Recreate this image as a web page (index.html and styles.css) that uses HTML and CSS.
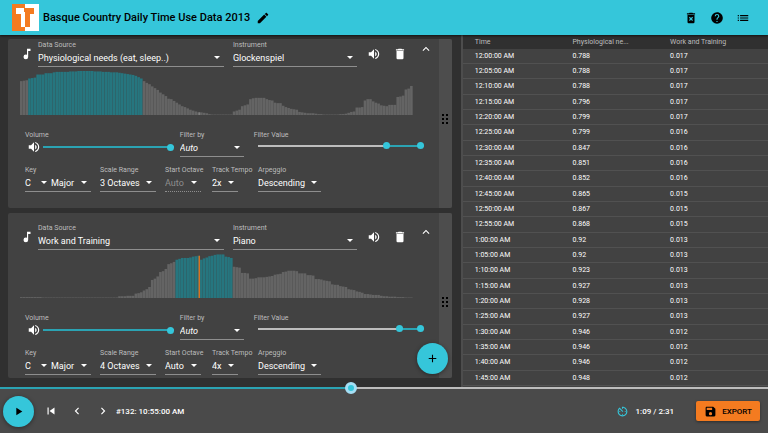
FILE: index.html
```html
<!DOCTYPE html>
<html lang="en">
<head>
    <meta charset="UTF-8">
    <meta name="viewport" content="width=device-width, initial-scale=1.0">
    <title>Basque Country Daily Time Use Data 2013</title>
    <link rel="stylesheet" href="styles.css">
</head>
<body>
    <svg class="sprite" aria-hidden="true">
        <symbol id="i-volume" viewBox="0 0 24 24"><path d="M14,3.23V5.29C16.89,6.15 19,8.83 19,12C19,15.17 16.89,17.84 14,18.7V20.77C18,19.86 21,16.28 21,12C21,7.72 18,4.14 14,3.23M16.5,12C16.5,10.23 15.5,8.71 14,7.97V16C15.5,15.29 16.5,13.76 16.5,12M3,9V15H7L12,20V4L7,9H3Z"/></symbol>
        <symbol id="i-delete" viewBox="0 0 24 24"><path d="M19,4H15.5L14.5,3H9.5L8.5,4H5V6H19M6,19A2,2 0 0,0 8,21H16A2,2 0 0,0 18,19V7H6V19Z"/></symbol>
        <symbol id="i-up" viewBox="0 0 24 24"><path d="M12 8l-6 6 1.41 1.41L12 10.83l4.59 4.58L18 14z"/></symbol>
        <symbol id="i-note" viewBox="0 0 24 24"><path d="M12,3V13.55C11.41,13.21 10.73,13 10,13A4,4 0 0,0 6,17A4,4 0 0,0 10,21A4,4 0 0,0 14,17V7H18V3H12Z"/></symbol>
        <symbol id="i-dots" viewBox="0 0 6 10"><path d="M0 0h2v2H0zM4 0h2v2H4zM0 4h2v2H0zM4 4h2v2H4zM0 8h2v2H0zM4 8h2v2H4z"/></symbol>
    </svg>

    <header class="topbar">
        <svg class="logo" viewBox="0 0 27 27" aria-hidden="true">
            <rect width="27" height="27" fill="#fff"/>
            <rect width="13" height="27" fill="#f47b20"/>
            <path fill="#fff" d="M4 4h9v19H9V10H4z"/>
            <path fill="#f47b20" d="M12 4h10v6h-4v13h-5V8h-1z"/>
        </svg>
        <h1>Basque Country Daily Time Use Data 2013</h1>
        <button class="icon-btn" aria-label="Edit title"><svg viewBox="0 0 24 24"><path d="M20.71,7.04C21.1,6.65 21.1,6 20.71,5.63L18.37,3.29C18,2.9 17.35,2.9 16.96,3.29L15.12,5.12L18.87,8.87M3,17.25V21H6.75L17.81,9.93L14.06,6.18L3,17.25Z"/></svg></button>
        <nav class="top-actions">
            <button class="icon-btn" aria-label="Clear"><svg viewBox="0 0 24 24"><path fill-rule="evenodd" d="M19,4H15.5L14.5,3H9.5L8.5,4H5V6H19M6,19A2,2 0 0,0 8,21H16A2,2 0 0,0 18,19V7H6V19ZM8.5 11.4l1.4-1.4 2.1 2.1 2.1-2.1 1.4 1.4-2.1 2.1 2.1 2.1-1.4 1.4-2.1-2.1-2.1 2.1-1.4-1.4 2.1-2.1z"/></svg></button>
            <button class="icon-btn" aria-label="Help"><svg viewBox="0 0 24 24"><path d="M15.07,11.25L14.17,12.17C13.45,12.89 13,13.5 13,15H11V14.5C11,13.39 11.45,12.39 12.17,11.67L13.41,10.41C13.78,10.05 14,9.55 14,9C14,7.89 13.1,7 12,7A2,2 0 0,0 10,9H8A4,4 0 0,1 12,5A4,4 0 0,1 16,9C16,9.88 15.64,10.67 15.07,11.25M13,19H11V17H13M12,2A10,10 0 0,0 2,12A10,10 0 0,0 12,22A10,10 0 0,0 22,12C22,6.47 17.5,2 12,2Z"/></svg></button>
            <button class="icon-btn" aria-label="Toggle data table"><svg viewBox="0 0 24 24"><path d="M3 13h2v-2H3v2zm0 4h2v-2H3v2zm0-8h2V7H3v2zm4 4h14v-2H7v2zm0 4h14v-2H7v2zM7 7v2h14V7H7z"/></svg></button>
        </nav>
    </header>

    <main class="workspace">
        <section class="tracks">
            <div class="track-list" id="trackList">
                <article class="track">
                    <div class="track-body">
                        <div class="row-source">
                            <svg class="note"><use href="#i-note"/></svg>
                            <div class="field grow-3">
                                <label for="source1">Data Source</label>
                                <div class="select"><select id="source1"><option>Physiological needs (eat, sleep..)</option></select></div>
                            </div>
                            <div class="field grow-2">
                                <label for="instrument1">Instrument</label>
                                <div class="select"><select id="instrument1"><option>Glockenspiel</option></select></div>
                            </div>
                            <div class="track-actions">
                                <button class="icon-btn" aria-label="Mute"><svg><use href="#i-volume"/></svg></button>
                                <button class="icon-btn" aria-label="Delete track"><svg><use href="#i-delete"/></svg></button>
                                <button class="icon-btn collapse" aria-label="Collapse"><svg><use href="#i-up"/></svg></button>
                            </div>
                        </div>
                        <svg class="chart" id="chart1" viewBox="0 0 288 100" preserveAspectRatio="none"></svg>
                        <div class="row-filter">
                            <div class="field volume">
                                <label for="volume1">Volume</label>
                                <div class="slider-line">
                                    <svg class="speaker"><use href="#i-volume"/></svg>
                                    <input class="slider" type="range" id="volume1" value="100">
                                </div>
                            </div>
                            <div class="field filter-by">
                                <label for="filter1">Filter by</label>
                                <div class="select"><select class="italic" id="filter1"><option>Auto</option></select></div>
                            </div>
                            <div class="field filter-value">
                                <label for="min1">Filter Value</label>
                                <div class="range-pair" style="--from: 79%">
                                    <input type="range" id="min1" value="79">
                                    <input type="range" id="max1" value="100" aria-label="Filter maximum">
                                </div>
                            </div>
                        </div>
                        <div class="row-scale">
                            <div class="field key">
                                <label for="key1">Key</label>
                                <div class="joined">
                                    <div class="select"><select id="key1"><option>C</option></select></div>
                                    <div class="select mode"><select id="mode1" aria-label="Mode"><option>Major</option></select></div>
                                </div>
                            </div>
                            <div class="field range">
                                <label for="range1">Scale Range</label>
                                <div class="select"><select id="range1"><option>3 Octaves</option></select></div>
                            </div>
                            <div class="field octave">
                                <label for="octave1">Start Octave</label>
                                <div class="select"><select id="octave1" disabled><option>Auto</option></select></div>
                            </div>
                            <div class="field tempo">
                                <label for="tempo1">Track Tempo</label>
                                <div class="select"><select id="tempo1"><option>2x</option></select></div>
                            </div>
                            <div class="field arpeggio">
                                <label for="arp1">Arpeggio</label>
                                <div class="select"><select id="arp1"><option>Descending</option></select></div>
                            </div>
                        </div>
                    </div>
                    <div class="handle"><svg><use href="#i-dots"/></svg></div>
                </article>

                <article class="track">
                    <div class="track-body">
                        <div class="row-source">
                            <svg class="note"><use href="#i-note"/></svg>
                            <div class="field grow-3">
                                <label for="source2">Data Source</label>
                                <div class="select"><select id="source2"><option>Work and Training</option></select></div>
                            </div>
                            <div class="field grow-2">
                                <label for="instrument2">Instrument</label>
                                <div class="select"><select id="instrument2"><option>Piano</option></select></div>
                            </div>
                            <div class="track-actions">
                                <button class="icon-btn" aria-label="Mute"><svg><use href="#i-volume"/></svg></button>
                                <button class="icon-btn" aria-label="Delete track"><svg><use href="#i-delete"/></svg></button>
                                <button class="icon-btn collapse" aria-label="Collapse"><svg><use href="#i-up"/></svg></button>
                            </div>
                        </div>
                        <svg class="chart" id="chart2" viewBox="0 0 288 100" preserveAspectRatio="none"></svg>
                        <div class="row-filter">
                            <div class="field volume">
                                <label for="volume2">Volume</label>
                                <div class="slider-line">
                                    <svg class="speaker"><use href="#i-volume"/></svg>
                                    <input class="slider" type="range" id="volume2" value="100">
                                </div>
                            </div>
                            <div class="field filter-by">
                                <label for="filter2">Filter by</label>
                                <div class="select"><select class="italic" id="filter2"><option>Auto</option></select></div>
                            </div>
                            <div class="field filter-value">
                                <label for="min2">Filter Value</label>
                                <div class="range-pair" style="--from: 87%">
                                    <input type="range" id="min2" value="87">
                                    <input type="range" id="max2" value="100" aria-label="Filter maximum">
                                </div>
                            </div>
                        </div>
                        <div class="row-scale">
                            <div class="field key">
                                <label for="key2">Key</label>
                                <div class="joined">
                                    <div class="select"><select id="key2"><option>C</option></select></div>
                                    <div class="select mode"><select id="mode2" aria-label="Mode"><option>Major</option></select></div>
                                </div>
                            </div>
                            <div class="field range">
                                <label for="range2">Scale Range</label>
                                <div class="select"><select id="range2"><option>4 Octaves</option></select></div>
                            </div>
                            <div class="field octave">
                                <label for="octave2">Start Octave</label>
                                <div class="select"><select id="octave2"><option>Auto</option></select></div>
                            </div>
                            <div class="field tempo">
                                <label for="tempo2">Track Tempo</label>
                                <div class="select"><select id="tempo2"><option>4x</option></select></div>
                            </div>
                            <div class="field arpeggio">
                                <label for="arp2">Arpeggio</label>
                                <div class="select"><select id="arp2"><option>Descending</option></select></div>
                            </div>
                        </div>
                    </div>
                    <div class="handle"><svg><use href="#i-dots"/></svg></div>
                </article>
            </div>
            <button class="round-btn add-track" aria-label="Add track"><svg viewBox="0 0 24 24"><path d="M19,13H13V19H11V13H5V11H11V5H13V11H19V13Z"/></svg></button>
        </section>

        <section class="data-panel">
            <table>
                <thead>
                    <tr><th>Time</th><th>Physiological ne...</th><th>Work and Training</th></tr>
                </thead>
                <tbody id="dataRows"></tbody>
            </table>
        </section>
    </main>

    <footer class="player">
        <input class="progress" type="range" min="0" max="1000" value="456" style="--from: 45.6%" aria-label="Position">
        <div class="controls">
            <button class="round-btn" aria-label="Play"><svg viewBox="0 0 24 24"><path d="M8,5.14V19.14L19,12.14L8,5.14Z"/></svg></button>
            <button class="icon-btn" aria-label="Back to start"><svg viewBox="0 0 24 24"><path d="M6,18V6H8V18H6M9.5,12L18,6V18L9.5,12Z"/></svg></button>
            <button class="icon-btn" aria-label="Previous"><svg viewBox="0 0 24 24"><path d="M15.41 7.41L14 6l-6 6 6 6 1.41-1.41L10.83 12z"/></svg></button>
            <button class="icon-btn" aria-label="Next"><svg viewBox="0 0 24 24"><path d="M10 6L8.59 7.41 13.17 12l-4.58 4.59L10 18l6-6z"/></svg></button>
            <span class="position">#132: 10:55:00 AM</span>
            <svg class="timer" viewBox="0 0 24 24"><path d="M11 17c0 .55.45 1 1 1s1-.45 1-1-.45-1-1-1-1 .45-1 1zm0-14v4h2V5.08c3.39.49 6 3.39 6 6.92 0 3.87-3.13 7-7 7s-7-3.13-7-7c0-1.68.59-3.22 1.58-4.42L12 13l1.41-1.41-6.8-6.8v.02C4.42 6.45 3 9.05 3 12c0 4.97 4.02 9 9 9 4.97 0 9-4.03 9-9s-4.03-9-9-9h-1zm7 9c0-.55-.45-1-1-1s-1 .45-1 1 .45 1 1 1 1-.45 1-1zM6 12c0 .55.45 1 1 1s1-.45 1-1-.45-1-1-1-1 .45-1 1z"/></svg>
            <span class="time">1:09 / 2:31</span>
            <button class="export"><svg viewBox="0 0 24 24"><path d="M17,3H5C3.89,3 3,3.9 3,5V19A2,2 0 0,0 5,21H19A2,2 0 0,0 21,19V7L17,3M12,19A3,3 0 0,1 9,16 3,3 0 0,1 12,13 3,3 0 0,1 15,16 3,3 0 0,1 12,19M15,9H5V5H15V9Z"/></svg>EXPORT</button>
        </div>
    </footer>
    <script src="app.js"></script>
</body>
</html>
```
FILE: styles.css
```css
* {
    box-sizing: border-box;
}
body {
    margin: 0;
    height: 100vh;
    display: flex;
    flex-direction: column;
    overflow: hidden;
    background: #303030;
    color: #fff;
    font-family: Roboto, sans-serif;
    font-size: 9px;
}
button, select, input {
    margin: 0;
    padding: 0;
    border: none;
    background: none;
    color: inherit;
    font: inherit;
}
button {
    cursor: pointer;
}
svg {
    fill: currentColor;
    flex: none;
}
.sprite {
    display: none;
}
.icon-btn {
    width: 26px;
    height: 26px;
    display: flex;
    align-items: center;
    justify-content: center;
    flex: none;
}
.icon-btn svg {
    width: 14px;
    height: 14px;
}
.round-btn {
    width: 31px;
    height: 31px;
    border-radius: 50%;
    background: #35c6da;
    color: #000;
    display: flex;
    align-items: center;
    justify-content: center;
    flex: none;
    box-shadow: 0 1px 4px rgba(0, 0, 0, 0.4);
}
.round-btn svg {
    width: 13px;
    height: 13px;
}

/* top bar */
.topbar {
    height: 35px;
    flex: none;
    display: flex;
    align-items: center;
    padding: 0 12px;
    background: #35c6da;
    color: #000;
    box-shadow: 0 1px 2px rgba(0, 0, 0, 0.6);
    z-index: 1;
}
.logo {
    width: 27px;
    height: 27px;
}
h1 {
    margin: 0 0 0 4px;
    font-size: 11px;
    font-weight: 500;
}
.top-actions {
    display: flex;
    margin-left: auto;
}

/* workspace */
.workspace {
    flex: 1;
    min-height: 0;
    display: flex;
}
.tracks {
    width: 60%;
    padding: 4px 9px 9px 8px;
    position: relative;
}
.track-list {
    height: 100%;
    overflow-y: auto;
    scrollbar-width: none;
    border-radius: 2px;
}
.track {
    display: flex;
    margin-bottom: 5px;
    background: #424242;
    border-radius: 2px;
    overflow: hidden;
}
.track-body {
    flex: 1;
    padding: 11px 0 16px 12px;
}
.handle {
    width: 13px;
    background: #4d4d4d;
    color: #000;
    display: flex;
    align-items: center;
    justify-content: center;
}
.handle svg {
    width: 6px;
    height: 10px;
}
.add-track {
    position: absolute;
    right: 13px;
    bottom: 13px;
}

/* fields */
.field label {
    display: block;
    height: 8px;
    line-height: 8px;
    font-size: 7px;
    color: #bdbdbd;
    white-space: nowrap;
}
.select {
    display: grid;
    align-items: center;
    height: 18px;
    border-bottom: 1px solid #8e8e8e;
}
.select select {
    grid-area: 1 / 1;
    width: 100%;
    height: 17px;
    appearance: none;
    outline: none;
}
.select::after {
    content: "";
    grid-area: 1 / 1;
    justify-self: end;
    margin-right: 4px;
    border: 3px solid transparent;
    border-top-color: #fff;
    border-bottom: none;
    pointer-events: none;
}
.select:has(select:disabled) {
    border-bottom-style: dotted;
}
.select select:disabled {
    color: #8e8e8e;
    opacity: 1;
}
.select .italic {
    font-style: italic;
}
.row-source {
    display: flex;
    height: 26px;
}
.note {
    width: 14px;
    height: 14px;
    margin: 6px 4px 0 0;
}
.grow-3 {
    flex: 3;
    margin-right: 9px;
}
.grow-2 {
    flex: 2;
}
.track-actions {
    display: flex;
    margin-left: 4px;
}
.collapse {
    height: 16px;
}
.chart {
    display: block;
    width: calc(100% - 26px);
    height: 44px;
    margin: 4px 0 16px;
}
.bar {
    fill: #646464;
}
.bar.on {
    fill: #26767f;
}
.bar.now {
    fill: #7e7e7e;
}
.bar.on.now {
    fill: #d9701f;
}
.row-filter, .row-scale {
    display: flex;
    height: 26px;
    padding: 0 15px 0 5px;
}
.row-filter {
    margin-bottom: 9px;
}
.volume {
    flex: 1;
    margin-right: 6px;
}
.filter-by {
    width: 64px;
    margin-right: 10px;
}
.filter-value {
    width: 170px;
}
.key {
    width: 66px;
    margin-right: 9px;
}
.range {
    width: 56px;
    margin-right: 9px;
}
.octave {
    width: 36px;
    margin-right: 11px;
}
.tempo {
    width: 26px;
    margin-right: 20px;
}
.arpeggio {
    width: 63px;
}
.joined {
    display: flex;
}
.joined .select {
    width: 26px;
}
.joined .mode {
    flex: 1;
}

/* sliders */
input[type="range"] {
    appearance: none;
    display: block;
    width: 100%;
    height: 7px;
    outline: none;
}
input[type="range"]::-webkit-slider-thumb {
    appearance: none;
    width: 7px;
    height: 7px;
    border-radius: 50%;
    background: #35c6da;
    pointer-events: auto;
}
.slider-line {
    display: flex;
    align-items: center;
    height: 16px;
    padding: 0 0 0 2px;
    gap: 2px;
}
.speaker {
    width: 14px;
    height: 14px;
}
.slider {
    background: linear-gradient(#2ba3b3, #2ba3b3) center / 100% 2px no-repeat;
}
.range-pair {
    display: grid;
    align-items: center;
    height: 13px;
    margin: 0 0 0 4px;
    background: linear-gradient(to right, #bdbdbd var(--from), #2ba3b3 var(--from)) center / 100% 2px no-repeat;
}
.range-pair input {
    grid-area: 1 / 1;
    pointer-events: none;
}

/* data table */
.data-panel {
    flex: 1;
    padding-bottom: 1px;
    border-left: 2px solid #4d4d4d;
    background: #424242;
}
table {
    width: 100%;
    height: 100%;
    table-layout: fixed;
    border-collapse: collapse;
    font-size: 7px;
}
th, td {
    padding: 0 0 0 12px;
    text-align: left;
    white-space: nowrap;
    line-height: 8px;
}
th {
    width: 32%;
    height: 14px;
    background: #303030;
    color: #bdbdbd;
    font-weight: 400;
}
th:last-child {
    width: 36%;
}
td {
    border-bottom: 1px solid #515151;
}

/* player */
.player {
    flex: none;
    height: 46px;
    background: #4a4a4a;
    z-index: 1;
}
.player .progress {
    height: 12px;
    margin-top: -5px;
    background: linear-gradient(to right, #2ba3b3 var(--from), #bdbdbd var(--from)) center / 100% 2px no-repeat;
}
.player .progress::-webkit-slider-thumb {
    width: 12px;
    height: 12px;
    border: 3px solid #a5dff5;
}
.controls {
    display: flex;
    align-items: center;
    height: 34px;
    padding: 0 8px 0 3px;
}
.controls .round-btn {
    margin-right: 4px;
}
.position {
    font-size: 8px;
    font-weight: 500;
}
.timer {
    width: 13px;
    height: 13px;
    margin-left: auto;
    color: #35c6da;
}
.time {
    margin: 0 22px 0 7px;
    font-size: 8px;
    font-weight: 500;
}
.export {
    display: flex;
    align-items: center;
    gap: 5px;
    height: 20px;
    padding: 0 8px;
    border-radius: 2px;
    background: #f47b20;
    color: #000;
    font-size: 8px;
    font-weight: 500;
    box-shadow: 0 1px 3px rgba(0, 0, 0, 0.4);
}
.export svg {
    width: 13px;
    height: 13px;
}
```
FILE: app.js
```js
// one value per ten minutes, percent of the track's maximum
const needs = [
    77, 78, 79, 83, 84, 85, 92, 92, 92, 95, 95, 95, 97, 98, 98, 98, 98, 98,
    99, 99, 99, 100, 100, 100, 100, 100, 100, 99, 99, 99, 98, 98, 98, 97, 97, 97,
    96, 95, 94, 93, 92, 91, 89, 86, 83, 77, 73, 70, 65, 61, 57, 51, 47, 43,
    37, 36, 32, 28, 24, 20, 18, 15, 12, 10, 8, 6, 6, 5, 4, 2, 1, 1,
    1, 1, 1, 1, 1, 1, 8, 10, 12, 20, 22, 24, 36, 38, 39, 39, 39, 39,
    36, 34, 33, 28, 27, 27, 21, 18, 16, 14, 13, 12, 7, 6, 5, 4, 4, 4,
    3, 2, 2, 1, 1, 1, 1, 1, 1, 2, 2, 3, 5, 7, 8, 17, 17, 18,
    33, 36, 36, 31, 28, 26, 22, 21, 20, 23, 23, 23, 41, 42, 44, 58, 60, 66
];
const work = [
    2, 2, 2, 2, 2, 2, 2, 2, 1, 1, 1, 1, 1, 1, 1, 1, 1, 1,
    1, 1, 1, 1, 1, 1, 1, 1, 1, 1, 1, 1, 1, 1, 1, 1, 1, 1,
    4, 4, 4, 5, 5, 5, 10, 11, 13, 17, 20, 25, 41, 44, 49, 59, 61, 66,
    77, 79, 82, 87, 89, 91, 91, 91, 92, 94, 95, 96, 87, 90, 92, 95, 96, 98,
    99, 99, 99, 94, 93, 91, 71, 70, 69, 57, 57, 56, 44, 44, 45, 47, 47, 47,
    48, 49, 50, 53, 54, 55, 59, 60, 62, 62, 62, 61, 56, 56, 56, 52, 52, 51,
    43, 43, 42, 40, 39, 38, 31, 30, 30, 27, 26, 25, 20, 19, 18, 15, 14, 12,
    9, 9, 8, 7, 7, 7, 5, 4, 4, 3, 3, 3, 2, 2, 2, 1, 1, 1
];

function addBar(svg, x, width, height, className) {
    const rect = document.createElementNS("http://www.w3.org/2000/svg", "rect");
    rect.setAttribute("x", x);
    rect.setAttribute("y", 100 - height);
    rect.setAttribute("width", width);
    rect.setAttribute("height", height);
    rect.setAttribute("class", className);
    svg.appendChild(rect);
}

function drawChart(id, values, from, to) {
    const svg = document.getElementById(id);
    values.forEach((value, i) => {
        addBar(svg, i * 2, 1.9, value, i >= from && i < to ? "bar on" : "bar");
    });
    // playhead
    const on = 65 >= from && 65 < to;
    addBar(svg, 130.9, 1.1, values[65], on ? "bar on now" : "bar now");
}

drawChart("chart1", needs, 3, 45);
drawChart("chart2", work, 57, 78);

const rows = [
    ["12:00:00 AM", "0.788", "0.017"],
    ["12:05:00 AM", "0.788", "0.017"],
    ["12:10:00 AM", "0.788", "0.017"],
    ["12:15:00 AM", "0.796", "0.017"],
    ["12:20:00 AM", "0.799", "0.017"],
    ["12:25:00 AM", "0.799", "0.016"],
    ["12:30:00 AM", "0.847", "0.016"],
    ["12:35:00 AM", "0.851", "0.016"],
    ["12:40:00 AM", "0.852", "0.016"],
    ["12:45:00 AM", "0.865", "0.015"],
    ["12:50:00 AM", "0.867", "0.015"],
    ["12:55:00 AM", "0.868", "0.015"],
    ["1:00:00 AM", "0.92", "0.013"],
    ["1:05:00 AM", "0.92", "0.013"],
    ["1:10:00 AM", "0.923", "0.013"],
    ["1:15:00 AM", "0.927", "0.013"],
    ["1:20:00 AM", "0.928", "0.013"],
    ["1:25:00 AM", "0.927", "0.013"],
    ["1:30:00 AM", "0.946", "0.012"],
    ["1:35:00 AM", "0.946", "0.012"],
    ["1:40:00 AM", "0.946", "0.012"],
    ["1:45:00 AM", "0.948", "0.012"]
];
const body = document.getElementById("dataRows");
rows.forEach(row => {
    const tr = body.insertRow();
    row.forEach(text => {
        tr.insertCell().innerText = text;
    });
});

document.getElementById("trackList").scrollTop = 9;
```
